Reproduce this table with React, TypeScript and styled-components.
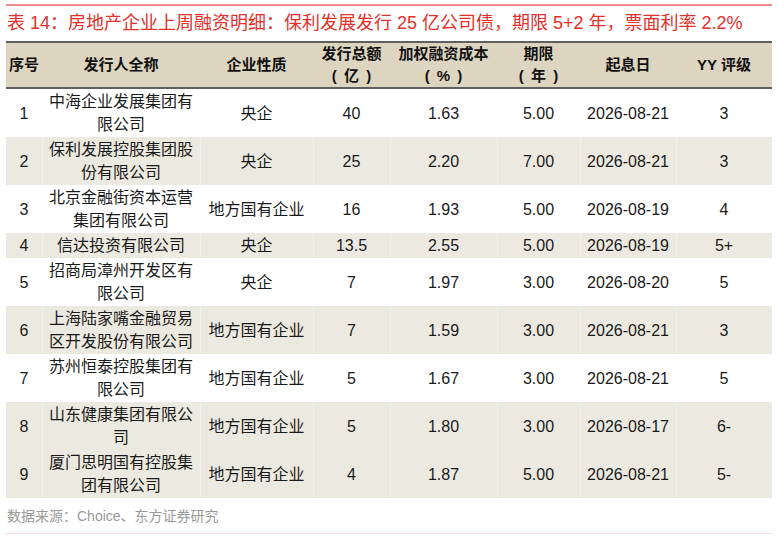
import React from "react";
import styled, { createGlobalStyle } from "styled-components";

const Global = createGlobalStyle`
  html, body { margin: 0; padding: 0; background: #ffffff; }
  body { font-family: "Liberation Sans", "Noto Sans CJK SC", sans-serif; color: #1a1a1a; }
`;

const Page = styled.div`
  width: 766px;
  padding: 4px 6px 0 6px;
  display: flex;
  flex-direction: column;
`;

const TopRule = styled.div`
  height: 2px;
  background: #f08c8c;
`;

const Title = styled.h1`
  margin: 0;
  height: 35px;
  line-height: 35px;
  font-size: 18px;
  font-weight: normal;
  color: #e3302b;
  padding-left: 1px;
  white-space: nowrap;
`;

const Table = styled.table`
  width: 766px;
  border-collapse: collapse;
  table-layout: fixed;
`;

const HeadRow = styled.tr`
  background: #ddd5c0;
  border-top: 2px solid #5f5f5f;
  border-bottom: 2px solid #5f5f5f;
`;

const Th = styled.th`
  height: 43px;
  padding: 0;
  font-size: 15px;
  line-height: 22px;
  font-weight: bold;
  color: #111;
  text-align: center;
  vertical-align: middle;
`;

const Unit = styled.span`
  word-spacing: 3px;
  white-space: pre;
`;

const Row = styled.tr<{ $shade: boolean }>`
  background: ${(p) => (p.$shade ? "#ece9e0" : "#ffffff")};
  & > td + td {
    box-shadow: ${(p) => (p.$shade ? "inset 1px 0 0 #f3f1eb" : "none")};
  }
`;

const Td = styled.td`
  padding: 1px 0;
  font-size: 16px;
  line-height: 23px;
  text-align: center;
  vertical-align: middle;
  color: #1a1a1a;
`;

const NameTd = styled(Td)`
  padding: 1px 6px;
`;

const Source = styled.div`
  height: 35px;
  line-height: 36px;
  font-size: 14px;
  color: #999;
  padding-left: 1px;
  border-bottom: 1px solid #fbdcdf;
`;

const widths = [36, 158, 113, 77, 107, 83, 96, 96];

const headers: React.ReactNode[] = [
  "序号",
  "发行人全称",
  "企业性质",
  <>发行总额<br /><Unit>( 亿 )</Unit></>,
  <>加权融资成本<br /><Unit>( % )</Unit></>,
  <>期限<br /><Unit>( 年 )</Unit></>,
  "起息日",
  "YY 评级",
];

type R = [string, string, string, string, string, string, string, string];

const rows: R[] = [
  ["1", "中海企业发展集团有限公司", "央企", "40", "1.63", "5.00", "2026-08-21", "3"],
  ["2", "保利发展控股集团股份有限公司", "央企", "25", "2.20", "7.00", "2026-08-21", "3"],
  ["3", "北京金融街资本运营集团有限公司", "地方国有企业", "16", "1.93", "5.00", "2026-08-19", "4"],
  ["4", "信达投资有限公司", "央企", "13.5", "2.55", "5.00", "2026-08-19", "5+"],
  ["5", "招商局漳州开发区有限公司", "央企", "7", "1.97", "3.00", "2026-08-20", "5"],
  ["6", "上海陆家嘴金融贸易区开发股份有限公司", "地方国有企业", "7", "1.59", "3.00", "2026-08-21", "3"],
  ["7", "苏州恒泰控股集团有限公司", "地方国有企业", "5", "1.67", "3.00", "2026-08-21", "5"],
  ["8", "山东健康集团有限公司", "地方国有企业", "5", "1.80", "3.00", "2026-08-17", "6-"],
  ["9", "厦门思明国有控股集团有限公司", "地方国有企业", "4", "1.87", "5.00", "2026-08-21", "5-"],
];

const shaded = [false, true, false, true, false, true, false, true, true];

export default function App() {
  return (
    <>
      <Global />
      <Page>
        <TopRule />
        <Title>表 14：房地产企业上周融资明细：保利发展发行 25 亿公司债，期限 5+2 年，票面利率 2.2%</Title>
        <Table>
          <colgroup>
            {widths.map((w, i) => (
              <col key={i} style={{ width: w }} />
            ))}
          </colgroup>
          <thead>
            <HeadRow>
              {headers.map((h, i) => (
                <Th key={i}>{h}</Th>
              ))}
            </HeadRow>
          </thead>
          <tbody>
            {rows.map((r, i) => (
              <Row key={i} $shade={shaded[i]}>
                <Td>{r[0]}</Td>
                <NameTd>{r[1]}</NameTd>
                <Td>{r[2]}</Td>
                <Td>{r[3]}</Td>
                <Td>{r[4]}</Td>
                <Td>{r[5]}</Td>
                <Td>{r[6]}</Td>
                <Td>{r[7]}</Td>
              </Row>
            ))}
          </tbody>
        </Table>
        <Source>数据来源：Choice、东方证券研究</Source>
      </Page>
    </>
  );
}
